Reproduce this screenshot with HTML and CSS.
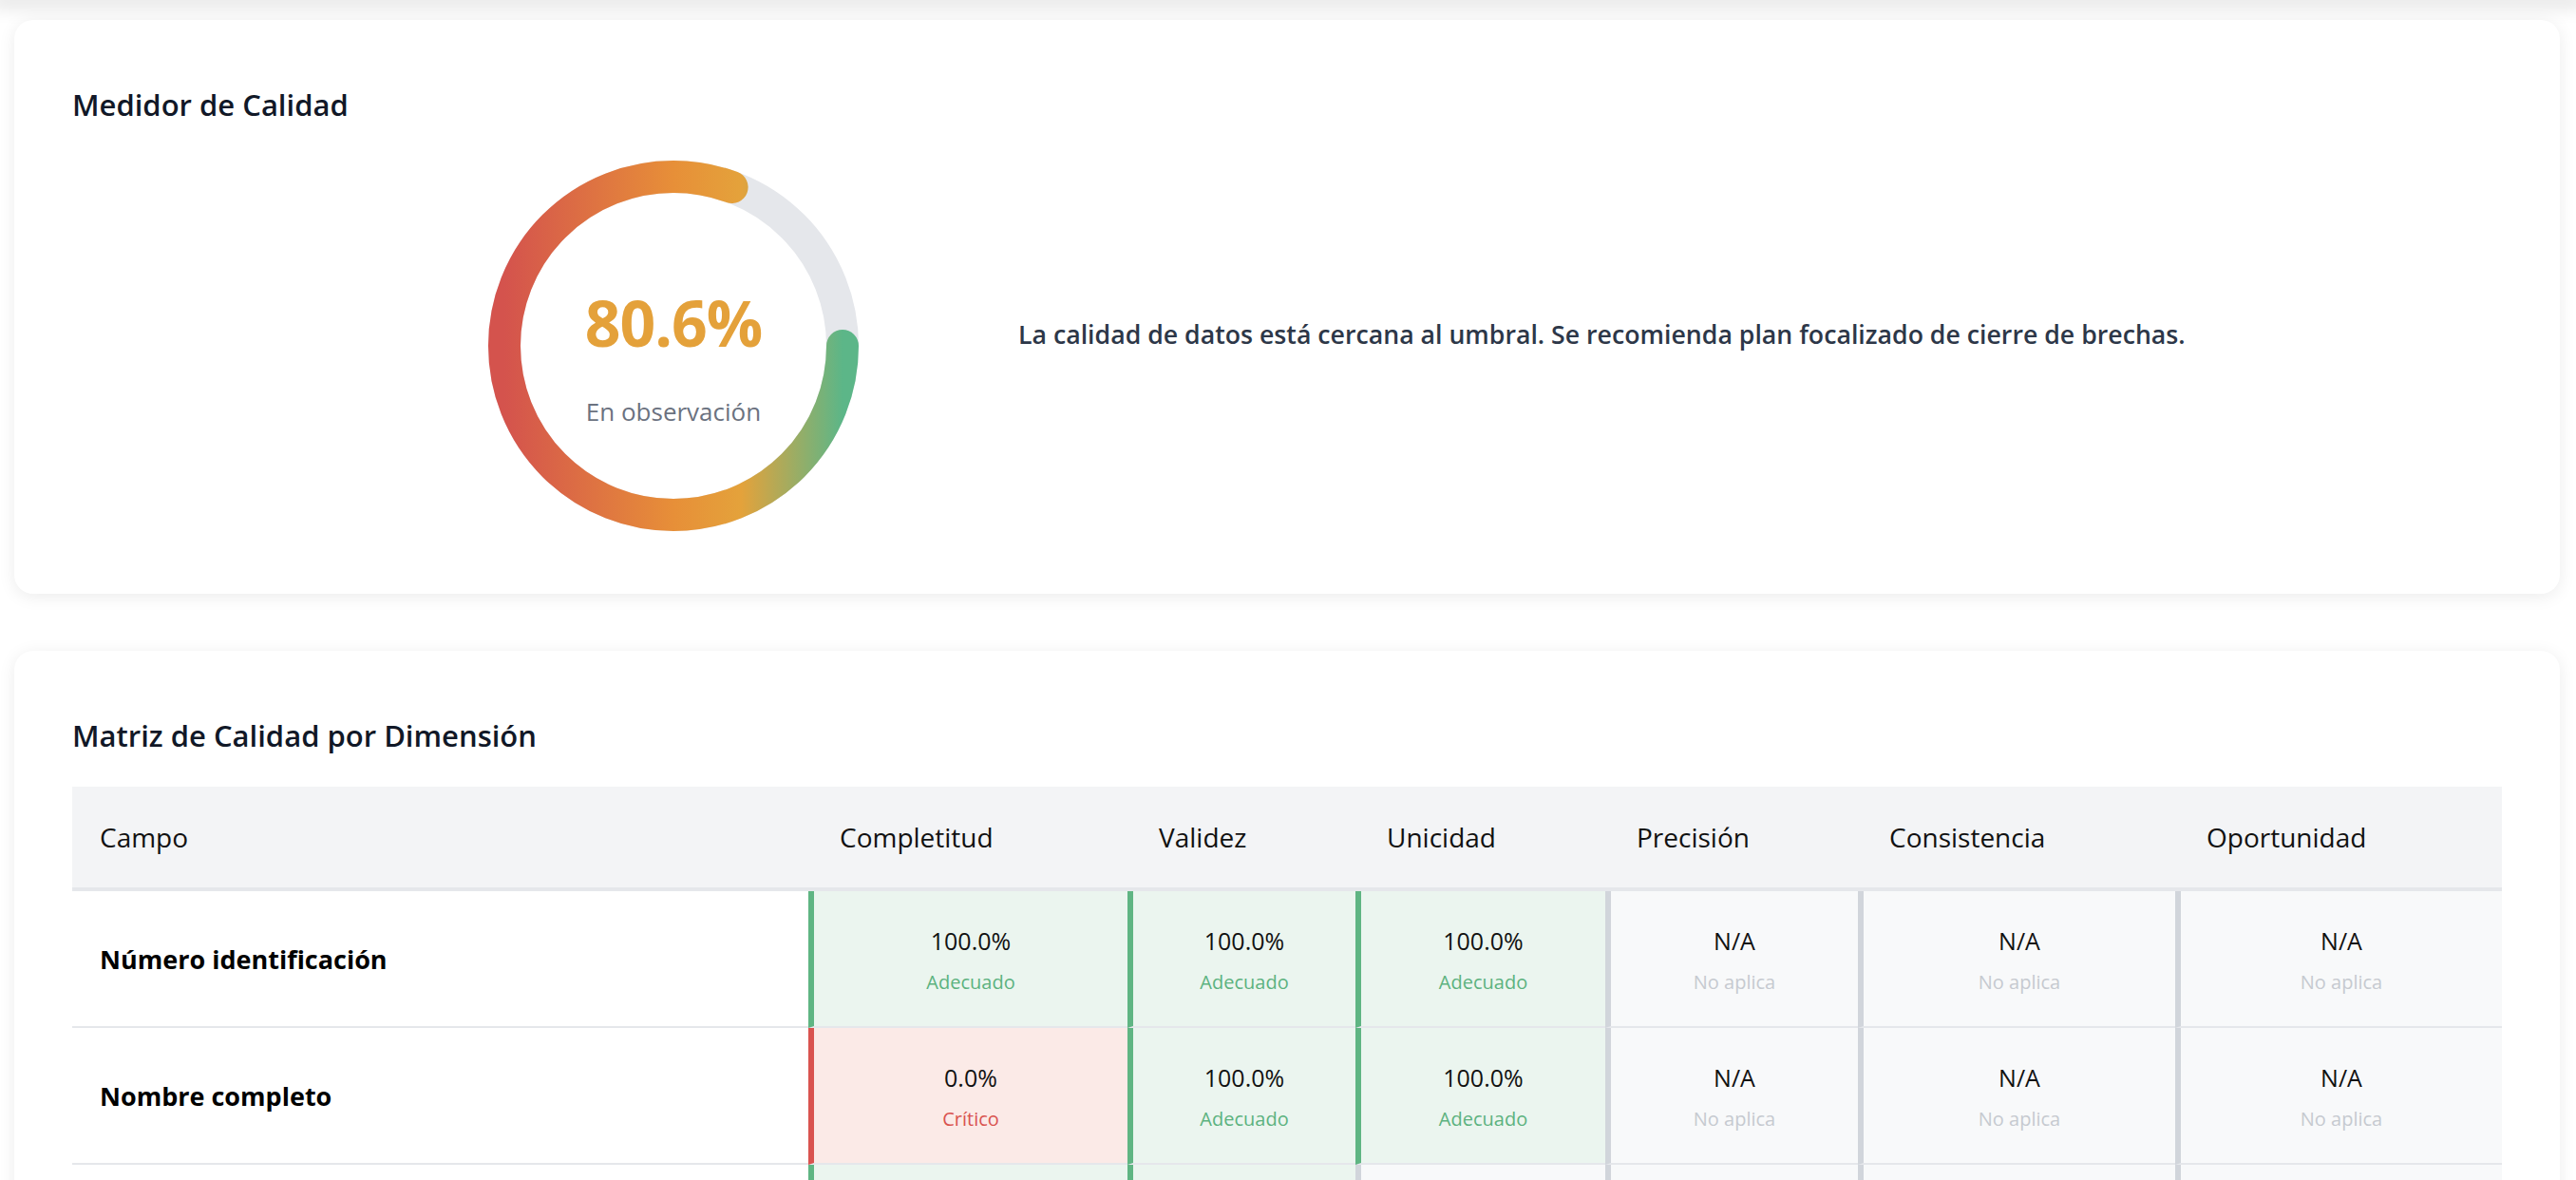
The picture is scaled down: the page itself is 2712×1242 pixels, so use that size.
FILE: index.html
```html
<!DOCTYPE html>
<html lang="es">
<head>
<meta charset="utf-8">
<title>Calidad de datos</title>
<link rel="stylesheet" href="styles.css">
</head>
<body>
<div class="scroll-edge"></div>
<main class="page">
  <section class="card">
    <h2 class="card-title">Medidor de Calidad</h2>
    <div class="gauge-row">
      <div class="gauge">
        <svg class="gauge-svg" width="400" height="400" viewBox="0 0 400 400">
          <defs>
            <linearGradient id="gaugeGrad" gradientUnits="userSpaceOnUse" x1="22" y1="200" x2="378" y2="200">
              <stop offset="0" stop-color="#d4534d"/>
              <stop offset="0.5" stop-color="#e78f38"/>
              <stop offset="0.7" stop-color="#e4a23b"/>
              <stop offset="1" stop-color="#5cb688"/>
            </linearGradient>
          </defs>
          <circle cx="200" cy="200" r="178" fill="none" stroke="#e5e7eb" stroke-width="34"/>
          <circle cx="200" cy="200" r="178" fill="none" stroke="url(#gaugeGrad)" stroke-width="34" stroke-linecap="round" stroke-dasharray="901.4 1118.4"/>
        </svg>
        <div class="gauge-center">
          <div class="gauge-value">80.6%</div>
          <div class="gauge-label">En observación</div>
        </div>
      </div>
      <p class="gauge-desc">La calidad de datos está cercana al umbral. Se recomienda plan focalizado de cierre de brechas.</p>
    </div>
  </section>

  <section class="card">
    <h2 class="card-title">Matriz de Calidad por Dimensión</h2>
    <table class="matrix">
      <colgroup>
        <col class="c-campo"><col class="c-compl"><col class="c-valid"><col class="c-unic"><col class="c-prec"><col class="c-cons"><col class="c-oport">
      </colgroup>
      <thead>
        <tr>
          <th class="th-campo">Campo</th>
          <th>Completitud</th>
          <th>Validez</th>
          <th>Unicidad</th>
          <th>Precisión</th>
          <th>Consistencia</th>
          <th>Oportunidad</th>
        </tr>
      </thead>
      <tbody>
        <tr>
          <td class="name">Número identificación</td>
          <td class="cell ok"><div class="val">100.0%</div><div class="st">Adecuado</div></td>
          <td class="cell ok"><div class="val">100.0%</div><div class="st">Adecuado</div></td>
          <td class="cell ok"><div class="val">100.0%</div><div class="st">Adecuado</div></td>
          <td class="cell na"><div class="val">N/A</div><div class="st">No aplica</div></td>
          <td class="cell na"><div class="val">N/A</div><div class="st">No aplica</div></td>
          <td class="cell na"><div class="val">N/A</div><div class="st">No aplica</div></td>
        </tr>
        <tr>
          <td class="name">Nombre completo</td>
          <td class="cell bad"><div class="val">0.0%</div><div class="st">Crítico</div></td>
          <td class="cell ok"><div class="val">100.0%</div><div class="st">Adecuado</div></td>
          <td class="cell ok"><div class="val">100.0%</div><div class="st">Adecuado</div></td>
          <td class="cell na"><div class="val">N/A</div><div class="st">No aplica</div></td>
          <td class="cell na"><div class="val">N/A</div><div class="st">No aplica</div></td>
          <td class="cell na"><div class="val">N/A</div><div class="st">No aplica</div></td>
        </tr>
        <tr>
          <td class="name">Fecha de nacimiento</td>
          <td class="cell ok"><div class="val">100.0%</div><div class="st">Adecuado</div></td>
          <td class="cell ok"><div class="val">100.0%</div><div class="st">Adecuado</div></td>
          <td class="cell na"><div class="val">N/A</div><div class="st">No aplica</div></td>
          <td class="cell na"><div class="val">N/A</div><div class="st">No aplica</div></td>
          <td class="cell na"><div class="val">N/A</div><div class="st">No aplica</div></td>
          <td class="cell na"><div class="val">N/A</div><div class="st">No aplica</div></td>
        </tr>
      </tbody>
    </table>
  </section>
</main>
</body>
</html>
```

FILE: styles.css
```css
* { box-sizing: border-box; }

html, body {
  margin: 0;
  background: #ffffff;
}

body {
  font-family: "Open Sans", "Noto Sans", Arial, sans-serif;
  color: #1f2937;
}

.scroll-edge {
  height: 0;
  box-shadow: 0 0 18px 9px rgba(0, 0, 0, 0.1);
}

.page {
  display: flex;
  flex-direction: column;
  gap: 60px;
  padding: 21px 17px 60px 15px;
}

.card {
  background: #ffffff;
  border-radius: 20px;
  box-shadow: 0 3px 18px rgba(0, 0, 0, 0.08);
  padding: 61px;
}

.card-title {
  margin: 0 0 26px;
  font-size: 31px;
  line-height: 56px;
  font-weight: 600;
  color: #111827;
}

.gauge-row {
  display: flex;
  align-items: center;
  gap: 163px;
  padding-left: 433px;
}

.gauge {
  display: grid;
  width: 400px;
  height: 400px;
  flex: none;
}

.gauge-svg {
  grid-area: 1 / 1;
  display: block;
}

.gauge-center {
  grid-area: 1 / 1;
  display: flex;
  flex-direction: column;
  align-items: center;
  justify-content: center;
  padding-top: 18px;
}

.gauge-value {
  font-size: 66px;
  line-height: 90px;
  font-weight: 700;
  letter-spacing: -1px;
  color: #e4a13a;
}

.gauge-label {
  margin-top: 29px;
  font-size: 26px;
  line-height: 40px;
  color: #6b7280;
}

.gauge-desc {
  margin: 0 0 24px;
  font-size: 26.7px;
  line-height: 40px;
  font-weight: 600;
  color: #2d3748;
}

.matrix {
  width: 2558px;
  table-layout: fixed;
  border-collapse: separate;
  border-spacing: 0;
}

.c-campo { width: 775px; }
.c-compl { width: 336px; }
.c-valid { width: 240px; }
.c-unic  { width: 263px; }
.c-prec  { width: 266px; }
.c-cons  { width: 334px; }
.c-oport { width: 344px; }

.matrix th {
  background: #f3f4f6;
  border-bottom: 4px solid #e5e7eb;
  padding: 33px 10px 33px 33px;
  text-align: left;
  font-size: 28px;
  line-height: 40px;
  font-weight: 500;
  color: #111111;
}

.matrix th.th-campo {
  padding-left: 29px;
}

.matrix td {
  border-bottom: 2px solid #e5e7eb;
  height: 144px;
}

.matrix td.name {
  padding: 0 10px 0 29px;
  font-size: 27px;
  font-weight: 700;
  color: #000000;
}

.cell {
  border-left: 6px solid #d1d5db;
  text-align: center;
  padding: 34px 8px 29px;
  vertical-align: top;
}

.val {
  font-size: 25px;
  line-height: 36px;
  font-weight: 500;
  color: #111111;
}

.st {
  margin-top: 11px;
  font-size: 20px;
  line-height: 30px;
}

.cell.ok {
  border-left-color: #5fb583;
  background: #ebf5ef;
}
.cell.ok .st { color: #5cb27f; }

.cell.bad {
  border-left-color: #d9534f;
  background: #fbeae7;
}
.cell.bad .st { color: #d9534f; }

.cell.na {
  border-left-color: #d1d5db;
  background: #f8f9fa;
}
.cell.na .st { color: #c6cad0; }
```
